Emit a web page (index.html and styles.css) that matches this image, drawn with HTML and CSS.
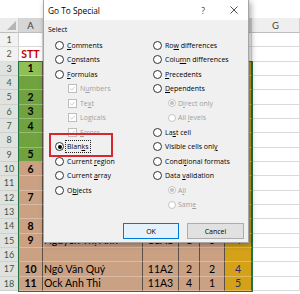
FILE: index.html
```html
<!DOCTYPE html>
<html lang="vi">
<head>
  <meta charset="UTF-8">
  <meta name="viewport" content="width=device-width, initial-scale=1.0">
  <title>Go To Special</title>
  <link rel="stylesheet" href="styles.css">
</head>
<body>
<div class="screen">
    <div class="formula-gap"></div>

    <div class="sheet">
        <div class="row col-heads">
            <div class="corner"><span class="tri"></span></div>
            <div class="ch sel">A</div>
            <div class="ch sel">B</div>
            <div class="ch sel">C</div>
            <div class="ch sel">D</div>
            <div class="ch sel">E</div>
            <div class="ch sel">F</div>
            <div class="ch">G</div>
        </div>

        <div class="row">
            <div class="rh">1</div>
            <div class="c"></div><div class="c"></div><div class="c"></div><div class="c"></div><div class="c"></div><div class="c"></div><div class="c"></div>
        </div>
        <div class="row">
            <div class="rh">2</div>
            <div class="c num red">STT</div><div class="c"></div><div class="c"></div><div class="c"></div><div class="c"></div><div class="c"></div><div class="c"></div>
        </div>
        <div class="row">
            <div class="rh sel">3</div>
            <div class="c act num">1</div><div class="c grn"></div><div class="c grn"></div><div class="c grn"></div><div class="c grn"></div><div class="c gold"></div><div class="c"></div>
        </div>
        <div class="row">
            <div class="rh sel">4</div>
            <div class="c grn num"></div><div class="c grn"></div><div class="c grn"></div><div class="c grn"></div><div class="c grn"></div><div class="c gold"></div><div class="c"></div>
        </div>
        <div class="row">
            <div class="rh sel">5</div>
            <div class="c grn num">2</div><div class="c grn"></div><div class="c grn"></div><div class="c grn"></div><div class="c grn"></div><div class="c gold"></div><div class="c"></div>
        </div>
        <div class="row">
            <div class="rh sel">6</div>
            <div class="c grn num">3</div><div class="c grn"></div><div class="c grn"></div><div class="c grn"></div><div class="c grn"></div><div class="c gold"></div><div class="c"></div>
        </div>
        <div class="row">
            <div class="rh sel">7</div>
            <div class="c grn num">4</div><div class="c grn"></div><div class="c grn"></div><div class="c grn"></div><div class="c grn"></div><div class="c gold"></div><div class="c"></div>
        </div>
        <div class="row">
            <div class="rh sel">8</div>
            <div class="c grn num"></div><div class="c grn"></div><div class="c grn"></div><div class="c grn"></div><div class="c grn"></div><div class="c gold"></div><div class="c"></div>
        </div>
        <div class="row">
            <div class="rh sel">9</div>
            <div class="c grn num">5</div><div class="c grn"></div><div class="c grn"></div><div class="c grn"></div><div class="c grn"></div><div class="c gold"></div><div class="c"></div>
        </div>
        <div class="row">
            <div class="rh sel">10</div>
            <div class="c tan num">6</div><div class="c tan"></div><div class="c tan"></div><div class="c tan"></div><div class="c tan"></div><div class="c gold"></div><div class="c"></div>
        </div>
        <div class="row">
            <div class="rh sel">11</div>
            <div class="c tan num"></div><div class="c tan"></div><div class="c tan"></div><div class="c tan"></div><div class="c tan"></div><div class="c gold"></div><div class="c"></div>
        </div>
        <div class="row">
            <div class="rh sel">12</div>
            <div class="c tan num">7</div><div class="c tan"></div><div class="c tan"></div><div class="c tan"></div><div class="c tan"></div><div class="c gold"></div><div class="c"></div>
        </div>
        <div class="row">
            <div class="rh sel">13</div>
            <div class="c tan num"></div><div class="c tan"></div><div class="c tan"></div><div class="c tan"></div><div class="c tan"></div><div class="c gold"></div><div class="c"></div>
        </div>
        <div class="row">
            <div class="rh sel">14</div>
            <div class="c tan num">8</div><div class="c tan"></div><div class="c tan"></div><div class="c tan"></div><div class="c tan"></div><div class="c gold"></div><div class="c"></div>
        </div>
        <div class="row">
            <div class="rh sel">15</div>
            <div class="c tan num">9</div><div class="c tan name">Nguyễn Thị Anh</div><div class="c tan mid">11A1</div><div class="c tan mid">1</div><div class="c tan mid">3</div><div class="c gold mid blue">4</div><div class="c"></div>
        </div>
        <div class="row">
            <div class="rh sel">16</div>
            <div class="c tan num"></div><div class="c tan"></div><div class="c tan"></div><div class="c tan"></div><div class="c tan"></div><div class="c gold"></div><div class="c"></div>
        </div>
        <div class="row">
            <div class="rh sel">17</div>
            <div class="c tan num">10</div><div class="c tan name">Ngô Văn Quý</div><div class="c tan mid">11A2</div><div class="c tan mid">2</div><div class="c tan mid">2</div><div class="c gold mid blue">4</div><div class="c"></div>
        </div>
        <div class="row">
            <div class="rh sel">18</div>
            <div class="c tan num">11</div><div class="c tan name">Ock Anh Thi</div><div class="c tan mid">11A3</div><div class="c tan mid">4</div><div class="c tan mid">1</div><div class="c gold mid blue">5</div><div class="c"></div>
        </div>
    </div>

    <div class="selection"></div>

    <div class="dialog">
        <div class="dlg-title">
            <span class="dlg-name">Go To Special</span>
            <span class="dlg-help">?</span>
            <svg class="dlg-close" width="8" height="8" viewBox="0 0 8 8">
                <path d="M0.5 0.5L7.5 7.5M7.5 0.5L0.5 7.5" stroke="#3a3a3a" stroke-width="0.9" fill="none"/>
            </svg>
        </div>

        <div class="dlg-body">
            <div class="dlg-label">Select</div>

            <div class="opts">
                <div class="opt-col">
                    <div class="opt"><span class="radio"></span><span><u>C</u>omments</span></div>
                    <div class="opt"><span class="radio"></span><span>C<u>o</u>nstants</span></div>
                    <div class="opt"><span class="radio"></span><span><u>F</u>ormulas</span></div>
                    <div class="opt sub dis"><span class="check"><svg viewBox="0 0 9 9"><path d="M1.6 4.6L3.6 6.5L7.4 2.3" stroke="#b9b9b9" stroke-width="1" fill="none"/></svg></span><span>N<u>u</u>mbers</span></div>
                    <div class="opt sub dis"><span class="check"><svg viewBox="0 0 9 9"><path d="M1.6 4.6L3.6 6.5L7.4 2.3" stroke="#b9b9b9" stroke-width="1" fill="none"/></svg></span><span>Te<u>x</u>t</span></div>
                    <div class="opt sub dis"><span class="check"><svg viewBox="0 0 9 9"><path d="M1.6 4.6L3.6 6.5L7.4 2.3" stroke="#b9b9b9" stroke-width="1" fill="none"/></svg></span><span>Lo<u>g</u>icals</span></div>
                    <div class="opt sub dis"><span class="check"><svg viewBox="0 0 9 9"><path d="M1.6 4.6L3.6 6.5L7.4 2.3" stroke="#b9b9b9" stroke-width="1" fill="none"/></svg></span><span><u>E</u>rrors</span></div>
                    <div class="opt"><span class="radio on"></span><span class="focus">Blan<u>k</u>s</span></div>
                    <div class="opt"><span class="radio"></span><span>Current <u>r</u>egion</span></div>
                    <div class="opt"><span class="radio"></span><span>Current <u>a</u>rray</span></div>
                    <div class="opt"><span class="radio"></span><span>O<u>b</u>jects</span></div>
                </div>
                <div class="opt-col">
                    <div class="opt"><span class="radio"></span><span>Ro<u>w</u> differences</span></div>
                    <div class="opt"><span class="radio"></span><span>Colu<u>m</u>n differences</span></div>
                    <div class="opt"><span class="radio"></span><span><u>P</u>recedents</span></div>
                    <div class="opt"><span class="radio"></span><span><u>D</u>ependents</span></div>
                    <div class="opt sub2 dis"><span class="radio small on"></span><span>D<u>i</u>rect only</span></div>
                    <div class="opt sub2 dis"><span class="radio small"></span><span>All <u>l</u>evels</span></div>
                    <div class="opt"><span class="radio"></span><span>La<u>s</u>t cell</span></div>
                    <div class="opt"><span class="radio"></span><span>Visible cells onl<u>y</u></span></div>
                    <div class="opt"><span class="radio"></span><span>Condi<u>t</u>ional formats</span></div>
                    <div class="opt"><span class="radio"></span><span>Data <u>v</u>alidation</span></div>
                    <div class="opt sub2 dis"><span class="radio small on"></span><span>A<u>l</u>l</span></div>
                    <div class="opt sub2 dis"><span class="radio small"></span><span>Sam<u>e</u></span></div>
                </div>
            </div>

            <div class="red-mark"></div>
        </div>

        <div class="dlg-buttons">
            <button class="btn default">OK</button>
            <button class="btn">Cancel</button>
        </div>
    </div>
</div>
</body>
</html>
```

FILE: styles.css
```css
* {
    box-sizing: border-box;
}

body {
    margin: 0;
    background: #fff;
    font-family: Lato, "Liberation Sans", sans-serif;
    color: #000;
}

.screen {
    position: relative;
    width: 300px;
    height: 294px;
    overflow: hidden;
}

.formula-gap {
    height: 18px;
    background: #fff;
}

/* sheet grid */

.row {
    display: grid;
    grid-template-columns: 19px 24px 100px 36px 21px 25px 27px 48px;
    height: 14.33px;
}

.col-heads {
    height: 15px;
}

.corner {
    display: flex;
    align-items: flex-end;
    justify-content: flex-end;
    padding: 0 2px 2px 0;
    background: #ececec;
    border-right: 1px solid #cfcfcf;
    border-bottom: 1px solid #bdbdbd;
}

.corner .tri {
    width: 0;
    height: 0;
    border-left: 9px solid transparent;
    border-bottom: 9px solid #b5b5b5;
}

.ch {
    display: flex;
    align-items: center;
    justify-content: center;
    font-size: 9.5px;
    color: #444;
    background: #efefef;
    border-right: 1px solid #d0d0d0;
    border-bottom: 1px solid #bdbdbd;
}

.ch.sel {
    background: #d6d6d6;
    color: #3c3c3c;
}

.rh {
    display: flex;
    align-items: center;
    justify-content: center;
    font-size: 9px;
    color: #555;
    background: #f2f2f2;
    border-right: 1px solid #cfcfcf;
    border-bottom: 1px solid #dcdcdc;
}

.rh.sel {
    background: #e0e2e0;
    color: #38584a;
    border-right-color: #6aa88a;
    border-bottom-color: #cdd2cd;
}

.c {
    display: flex;
    align-items: center;
    overflow: hidden;
    white-space: nowrap;
    font-size: 10.5px;
    border-right: 1px solid #dadada;
    border-bottom: 1px solid #dadada;
}

.grn,
.act,
.tan,
.gold {
    border-right-color: #5c4f46;
    border-bottom-color: rgba(255, 255, 255, 0.28);
}

.act { background: #8fbf55; }
.grn { background: #70a23f; }
.tan { background: #cba184; }
.gold { background: #d4a119; }

.num {
    justify-content: center;
    font-weight: bold;
}

.mid {
    justify-content: center;
}

.name {
    padding-left: 1px;
}

.red { color: #c00000; }
.blue { color: #2e2a70; }

.selection {
    position: absolute;
    left: 18px;
    top: 61px;
    width: 235px;
    height: 231px;
    border: 1px solid #217346;
    pointer-events: none;
}

/* dialog */

.dialog {
    position: absolute;
    left: 43px;
    top: 0;
    width: 206px;
    height: 243px;
    display: flex;
    flex-direction: column;
    background: #f0f0f0;
    border: 1px solid #a5a5a5;
    border-top: none;
    box-shadow: 2px 2px 6px rgba(0, 0, 0, 0.35);
    font-family: "Open Sans", "Noto Sans", sans-serif;
    font-size: 7px;
}

.dlg-title {
    display: flex;
    align-items: center;
    height: 20px;
    padding: 0 10px 0 4px;
    background: #fff;
}

.dlg-name {
    font-size: 8.3px;
}

.dlg-help {
    margin-left: auto;
    margin-right: 25px;
    font-size: 8.5px;
    color: #333;
}

.dlg-body {
    position: relative;
    padding: 5px 0 0 11px;
}

.dlg-label {
    height: 10px;
    line-height: 10px;
    margin-left: -7px;
}

.opts {
    display: grid;
    grid-template-columns: 98px 1fr;
    margin-top: 2.75px;
}

.opt {
    display: flex;
    align-items: center;
    gap: 3px;
    height: 14.5px;
    white-space: nowrap;
}

.opt u {
    text-underline-offset: 1px;
}

.opt.sub {
    padding-left: 13px;
}

.opt.sub2 {
    padding-left: 15px;
    gap: 2px;
}

.opt.dis {
    color: #9f9f9f;
}

.radio {
    flex: none;
    display: flex;
    align-items: center;
    justify-content: center;
    width: 9px;
    height: 9px;
    border: 1px solid #333;
    border-radius: 50%;
    background: #fff;
}

.radio.on::after {
    content: "";
    width: 4px;
    height: 4px;
    border-radius: 50%;
    background: #000;
}

.radio.small {
    width: 8px;
    height: 8px;
    border-color: #c4c4c4;
}

.radio.small.on::after {
    width: 3.5px;
    height: 3.5px;
    background: #c4c4c4;
}

.check {
    flex: none;
    width: 9px;
    height: 9px;
    border: 1px solid #bdbdbd;
    background: #fff;
}

.check svg {
    display: block;
    width: 7px;
    height: 7px;
}

.focus {
    outline: 1px dotted #222;
    outline-offset: 1px;
}

.red-mark {
    position: absolute;
    left: 5px;
    top: 113px;
    width: 64px;
    height: 24px;
    border: 2.5px solid #d7282f;
}

.dlg-buttons {
    display: flex;
    justify-content: flex-end;
    gap: 8px;
    margin-top: auto;
    padding: 0 4px 3px 0;
}

.btn {
    width: 57px;
    height: 16px;
    padding: 0;
    font-family: "Open Sans", "Noto Sans", sans-serif;
    font-size: 7px;
    color: #000;
    background: #e1e1e1;
    border: 1px solid #adadad;
}

.btn.default {
    width: 56px;
    background: #e5f1fb;
    border-color: #0078d7;
}
```
